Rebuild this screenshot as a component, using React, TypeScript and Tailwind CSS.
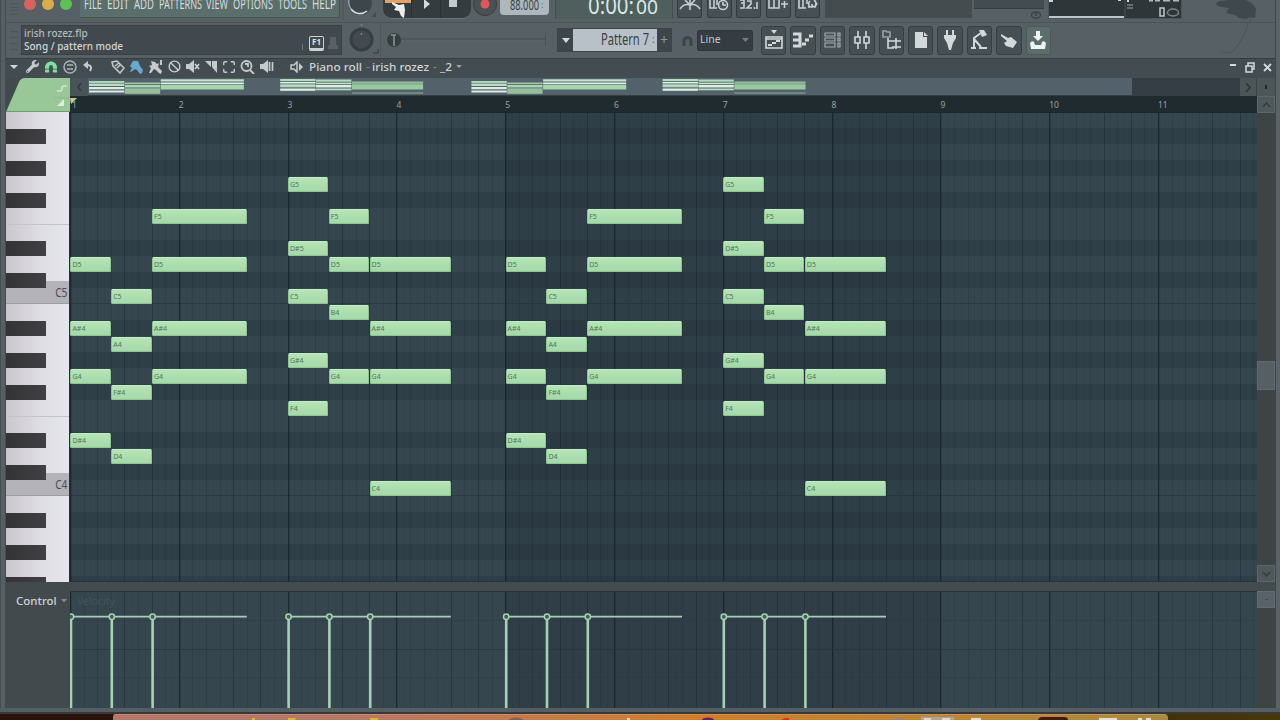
import React from 'react';
import { FaMagnet, FaWrench } from 'react-icons/fa';
import { Ban, Maximize } from 'lucide-react';

const STEP = 6.8;
const ROW = 16;
const GRID_W = 1187;

// Top to bottom, starting at the first visible row
const ROWS = [
    'B5', 'A#5', 'A5', 'G#5', 'G5', 'F#5', 'F5', 'E5', 'D#5', 'D5', 'C#5', 'C5',
    'B4', 'A#4', 'A4', 'G#4', 'G4', 'F#4', 'F4', 'E4', 'D#4', 'D4', 'C#4', 'C4',
    'B3', 'A#3', 'A3', 'G#3', 'G3', 'F#3',
];

interface Chord {
    start: number;
    end: number;
    keys: string[];
}

const PHRASE: Chord[] = [
    { start: 0, end: 6, keys: ['D5', 'A#4', 'G4', 'D#4'] },
    { start: 6, end: 12, keys: ['C5', 'A4', 'F#4', 'D4'] },
    { start: 12, end: 26, keys: ['F5', 'D5', 'A#4', 'G4'] },
    { start: 32, end: 38, keys: ['G5', 'D#5', 'C5', 'G#4', 'F4'] },
    { start: 38, end: 44, keys: ['F5', 'D5', 'B4', 'G4'] },
    { start: 44, end: 56, keys: ['D5', 'A#4', 'G4', 'C4'] },
];

const CHORDS: Chord[] = [0, 64].flatMap(offset =>
    PHRASE.map(c => ({ ...c, start: c.start + offset, end: c.end + offset })),
);

// [top, height, color] stripes of the overview strip, one list per chord
const OVERVIEW: [number, number, string][][] = [
    [[3, 2, '#a9d4b4'], [5.5, 2.5, '#b9dcc4'], [9, 2.3, '#dcefe2'], [12.5, 2, '#dcefe2']],
    [[4.5, 1.7, '#9fcaa5'], [7, 2.5, '#a9d6af'], [10.3, 5.5, '#93c09a']],
    [[1.3, 2.2, '#c4e6cd'], [4.5, 1.8, '#e2f3e8'], [7, 4.5, '#a6d6ac']],
    [[1, 2.2, '#b4dcbc'], [4, 1.5, '#e2f3e8'], [6.3, 3, '#b4dcbc'], [10.5, 2.3, '#dcefe2']],
    [[1.5, 2.2, '#b4dcbc'], [4.6, 1.6, '#c4e6cd'], [7, 2.5, '#dcefe2'], [10.5, 1.8, '#b4dcbc']],
    [[3.5, 2.3, '#93c09a'], [6.2, 5.3, '#98c99f'], [14, 2, '#71877f']],
];

function Grip({ height }: { height: string }) {
    return (
        <div className={`w-[15px] shrink-0 flex flex-col items-center justify-evenly ${height}`}>
            {[0, 1, 2, 3].map(i => (
                <span key={i} className="w-[8px] h-px bg-[#4b555a]" />
            ))}
        </div>
    );
}

function Squeezed({ width, className, children }: { width: number; className: string; children: string }) {
    return (
        <svg width={width} height="22" className={`shrink-0 overflow-visible ${className}`} fill="currentColor">
            <text x="0" y="15" textLength={width} lengthAdjust="spacingAndGlyphs">
                {children}
            </text>
        </svg>
    );
}

const MENU: [string, number][] = [
    ['FILE', 18], ['EDIT', 22], ['ADD', 20], ['PATTERNS', 43],
    ['VIEW', 22], ['OPTIONS', 40], ['TOOLS', 29], ['HELP', 24],
];

function TopButton({ children }: { children: React.ReactNode }) {
    return (
        <div className="w-[25px] h-[18px] shrink-0 rounded-b-[3px] border border-t-0 border-[#333b3f] bg-[#465055] flex justify-center">
            <svg width="22" height="15" fill="none" stroke="#c8cfd1" strokeWidth="1.6">
                {children}
            </svg>
        </div>
    );
}

function MenuBar() {
    return (
        <div className="h-[23px] shrink-0 flex items-start overflow-hidden border-b border-[#495358] bg-[#566065]">
            <Grip height="h-[18px]" />
            <div className="w-[59px] shrink-0 flex gap-[6px] pl-[3px] -mt-[2px]">
                <span className="size-[12px] rounded-full bg-[#d8625f]" />
                <span className="size-[12px] rounded-full bg-[#d9ad4d]" />
                <span className="size-[12px] rounded-full bg-[#5fc155]" />
            </div>
            <div className="w-[260px] h-[18px] shrink-0 flex justify-between items-start bg-[#5a6e6b] border-b border-r border-[#45524f] pl-[4px] pr-[3px] overflow-hidden">
                {MENU.map(([label, width]) => (
                    <Squeezed key={label} width={width} className="text-[#d5dedb] text-[15px] -mt-[6px]">
                        {label}
                    </Squeezed>
                ))}
            </div>
            <svg width="41" height="20" className="shrink-0">
                <circle cx="20" cy="3" r="12" fill="#3d464a" />
                <path d="M11 9A11 11 0 0 0 27 11" fill="none" stroke="#d8dfe0" strokeWidth="1.6" />
                <path d="M11 9A11 11 0 0 1 9 0" fill="none" stroke="#a8b0b2" strokeWidth="1.2" />
                <path d="M31 17h5v-5z" fill="#424c50" />
                <path d="M3 0v20" stroke="#4a5459" />
            </svg>
            <div className="w-[88px] h-[19px] shrink-0 ml-[2px] rounded-b-[9px] bg-[#353c40] border-b border-[#6a7477] overflow-hidden">
                <svg width="88" height="18">
                    <path d="M2 0h26v3H2z" fill="#e0a565" />
                    <path d="M28.500 0v18M57.500 0v18" stroke="#2a3033" />
                    <path d="M41 -1l6 5-6 5z" fill="#d5dadb" />
                    <path d="M66 0h8v7h-8z" fill="#c6cccd" />
                    <path d="M9 2l7 3 5-1 1 6-1 8-3-2-2-5-5-1 2-3-4-3z" fill="#eceeee" />
                </svg>
            </div>
            <svg width="28" height="18" className="shrink-0">
                <circle cx="14" cy="4" r="11.5" fill="#4b5054" stroke="#353c40" />
                <circle cx="14" cy="4" r="4.5" fill="#e2585a" />
            </svg>
            <div className="w-[49px] h-[15px] shrink-0 rounded-b-[4px] ml-px bg-[#adb7bc] flex pl-[10px] overflow-hidden">
                <Squeezed width={29} className="text-[#394347] text-[14px] -mt-[5px]">
                    88.000
                </Squeezed>
                <span className="pl-[2px] -mt-[2px] text-[9px] leading-[14px] text-[#59646a]">:</span>
            </div>
            <div className="w-[118px] h-[19px] shrink-0 ml-[6px] bg-[#4e5f5e] border-x border-[#424e4e] flex pl-[32px] overflow-hidden">
                <Squeezed width={46} className="text-[#dbe7e4] text-[23px] -mt-[1px]">
                    0:00:
                </Squeezed>
                <Squeezed width={22} className="text-[#dbe7e4] text-[19px] ml-[2px] -mt-[1px]">
                    00
                </Squeezed>
            </div>
            <div className="shrink-0 flex gap-[4.5px] ml-[4px]">
                <TopButton>
                    <path d="M1 9q4-6 10-4 6-2 10 4M11 0v10M6 0l4 4M16 0l-4 4" />
                </TopButton>
                <TopButton>
                    <path d="M2 0v8h7M6 0v8M9 0v5" />
                    <circle cx="15" cy="5" r="4.5" />
                    <path d="M15 2v3h3" />
                </TopButton>
                <TopButton>
                    <path d="M2 0h4v3H3h3v5H2M9 1h4v3L9 8h5M19 2v7M16.500 7v2" />
                </TopButton>
                <TopButton>
                    <path d="M2 0v8h10V0M7 0v8M14 4h7M17.500 1v7" />
                </TopButton>
                <TopButton>
                    <path d="M2 0v8h7M6 0v8M10 0v4" />
                    <path d="M13 7a4 4 0 0 1 0-6M17 0a4 4 0 0 1 1 6M11 7h4v-3M20 3l-2 4-3-1" />
                </TopButton>
            </div>
            <div className="w-[147px] h-[18px] shrink-0 ml-[5px] bg-[#444c50]" />
            <div className="w-[70px] shrink-0 ml-[2px] flex flex-col items-end">
                <div className="w-full h-[9px] bg-[#444c50] border-b border-[#363e42]" />
                <svg width="14" height="12" className="mr-[1px]" fill="none" stroke="#3a4347" strokeWidth="1.3">
                    <ellipse cx="7" cy="6" rx="4.500" ry="3" />
                    <path d="M7 4v3" />
                </svg>
            </div>
            <svg width="134" height="19" className="shrink-0 ml-[4px]">
                <path d="M0 0h134v19H0z" fill="#4a5357" />
                <path d="M1 0h132v18H1z" fill="#2f363a" />
                <path d="M1 17h75" stroke="#bfc6c8" strokeWidth="2" />
                <path d="M77 0v18" stroke="#454e52" />
                <path d="M1 0h4v2H1zM70 0h3v1h-3zM79 0h2v2h-2z" fill="#cfd5d6" />
                <path d="M79 4h6v2h-6zM79 7h6v2h-6z" fill="#667074" />
                <path d="M112 8h4v8h-4z" fill="none" stroke="#c0c7c9" strokeWidth="1.5" />
                <ellipse cx="125" cy="12.500" rx="5.500" ry="3.500" fill="none" stroke="#7c8689" strokeWidth="1.5" />
                <path d="M101 0h4M107 0h5M115 0h7M125 0h6" stroke="#b0b8ba" strokeWidth="3" />
            </svg>
            <svg width="70" height="22" className="shrink-0 ml-[5px]">
                <path d="M29 4q2-4 8-3l5-2h14q10 3 13 10l-1 9-5-1-4 2-7-1-4-3-9-2 3-5-7-1-4-1z" fill="#3f484d" />
                <path d="M64 17q-1 3-1 5" stroke="#465055" fill="none" />
            </svg>
        </div>
    );
}

function ToolButton({ active, children }: { active?: boolean; children: React.ReactNode }) {
    return (
        <div
            className={`h-[29px] rounded-[3px] border flex items-center justify-center ${
                active ? 'bg-[#5c6d6b] border-[#4d5a5a]' : 'bg-[#454f54] border-[#353e42]'
            }`}
        >
            <svg width="22" height="22" fill="none" stroke="#d3d9da" strokeWidth="1.6">
                {children}
            </svg>
        </div>
    );
}

function ToolBar() {
    return (
        <div className="h-[35px] shrink-0 flex items-center bg-[#566065] pb-px">
            <Grip height="h-[29px]" />
            <div className="w-[321px] h-[30px] shrink-0 bg-[#41494e] border border-[#394145] flex justify-between">
                <div className="pl-[2px] pt-px text-[10px] leading-[12.500px] font-medium text-[#cfd5d7]">
                    <p className="text-[#b3babd]">irish rozez.flp</p>
                    <p className="whitespace-nowrap">Song / pattern mode</p>
                </div>
                <div className="flex items-end pb-[3px] pr-[2px]">
                    <span className="w-px h-[6px] bg-[#6c7579] mr-[6px] mb-px" />
                    <span className="w-[15px] h-[15px] rounded-[2px] border-[1.500px] border-b-[3px] border-[#cbd2d3] text-[8px] leading-[9px] text-center font-bold text-[#dde3e4]">
                        F1
                    </span>
                    <svg width="15" height="15" fill="#586165">
                        <path d="M6 1h6v8h2v4H4V9h2z" />
                    </svg>
                </div>
            </div>
            <svg width="38" height="34" className="shrink-0" fill="none">
                <circle cx="19.500" cy="16.500" r="12" fill="#363e43" />
                <circle cx="19.500" cy="16.500" r="9" fill="#434b51" />
                <path d="M19.500 10v2M19.500 1v2" stroke="#7a8386" strokeWidth="1.500" />
                <path d="M31 30h5v-4" stroke="#3f484c" strokeWidth="1.500" />
            </svg>
            <svg width="178" height="34" className="shrink-0" fill="none">
                <path d="M0.500 0v34" stroke="#4d565b" />
                <path d="M14 16h152" stroke="#4c565b" strokeWidth="2" />
                <path d="M14 18h152" stroke="#5e686c" />
                <path d="M165.500 9v14" stroke="#495257" />
                <circle cx="14" cy="17" r="7" fill="#373e42" />
                <path d="M14 12v11M11 12h5" stroke="#8d9695" strokeWidth="1.500" />
            </svg>
            <div className="w-[115px] h-[24px] shrink-0 -ml-px flex border border-[#3d464a] bg-[#3d464a]">
                <div className="w-[15px] flex items-center justify-center">
                    <svg width="8" height="5" fill="#d5dadb">
                        <path d="M0 0h8L4 5z" />
                    </svg>
                </div>
                <div className="w-[84px] h-[22px] bg-[#b7c1c7] flex justify-end pr-[2px]">
                    <Squeezed width={48} className="text-[#394247] text-[16px] mt-px">
                        Pattern 7
                    </Squeezed>
                    <span className="w-[6px] pl-[3px] text-[10px] leading-[20px] text-[#59646a]">:</span>
                </div>
                <div className="flex-1 text-center text-[14px] leading-[21px] text-[#8b9598]">+</div>
            </div>
            <div className="w-[25px] shrink-0 flex justify-end pr-[4px] pl-[4px]">
                <svg width="11" height="11" fill="none" stroke="#3b4448" strokeWidth="3">
                    <path d="M2 11V6a3.500 3.500 0 0 1 7 0v5" />
                </svg>
            </div>
            <div className="w-[56px] h-[21px] shrink-0 rounded-[2px] bg-[#363d41] border border-[#30373b] flex items-center justify-between pl-[2px] pr-[3px] text-[10.5px] text-[#bfc6c9]">
                Line
                <svg width="7" height="4" fill="#737d81">
                    <path d="M0 0h7L3.500 4z" />
                </svg>
            </div>
            <div className="w-[290px] shrink-0 ml-[8px] grid grid-cols-10 gap-[4px]">
                <ToolButton>
                    <path d="M3 8h16v11H3zM3 10h16" />
                    <path d="M8 1h6l-3 4z" fill="#d3d9da" stroke="none" />
                    <path d="M5 16h4M9 14h4M13 12h4" strokeWidth="2" />
                </ToolButton>
                <ToolButton>
                    <path d="M1 5h7v12H1M1 11h7" strokeWidth="3" />
                    <path d="M10 15h4M13 11h4M17 7h4" strokeWidth="3" />
                </ToolButton>
                <ToolButton>
                    <path d="M4 4h10v3H4zM4 9h10v3H4zM4 14h10v4H4zM17 4h2v3h-2zM17 9h2v3h-2zM17 14h2v4h-2z" stroke="#a3abad" strokeWidth="1.200" />
                </ToolButton>
                <ToolButton>
                    <path d="M7 2v6M7 14v6M15 2v6M15 14v6M4 8h5v6H4zM13 8h5v6h-5z" />
                </ToolButton>
                <ToolButton>
                    <path d="M3 2h3l1 1h3v5H3z" stroke="#9aa3a6" />
                    <path d="M8 9v10h6M8 12h6M16 9v11M12 12h9M12 18h9" />
                </ToolButton>
                <ToolButton>
                    <path d="M5 3h8v5h4v11H5zM14 3l4 4h-4z" fill="#d3d9da" stroke="none" />
                </ToolButton>
                <ToolButton>
                    <path d="M7 1h2v5h4V1h2v5h2v3l-3 5-2 7h-2l-2-7-3-5V6h2z" fill="#d3d9da" stroke="none" />
                </ToolButton>
                <ToolButton>
                    <path d="M6 18V9l7-5M6 10l7 8M3 19h5M11 19h8" strokeWidth="2" />
                    <path d="M11 1h5l3 5-5 2z" fill="#d3d9da" stroke="none" />
                </ToolButton>
                <ToolButton>
                    <path d="M3 5l7 4 3-1 6 5-4 6-7-2-2-3 3-2-6-5z" fill="#d3d9da" stroke="none" />
                </ToolButton>
                <ToolButton active>
                    <path d="M9 2h4v5h3l-5 5-5-5h3z" fill="#eef4f3" stroke="none" />
                    <path d="M3 14q2-3 4-1l1 3h6l1-3q2-2 4 1l-1 6H4z" fill="#eef4f3" stroke="none" />
                </ToolButton>
            </div>
            <svg width="34" height="34" className="ml-auto mr-[21px] shrink-0" fill="none" stroke="#49545a">
                <path d="M28 0q-3 14-14 27-4 5-13 1" />
            </svg>
        </div>
    );
}

function Speaker({ children }: { children?: React.ReactNode }) {
    return (
        <svg width="15" height="13" fill="#c5cbcd" stroke="#c5cbcd" strokeWidth="1.700">
            <path d="M1 4h3l5-4v13L4 9H1z" stroke="none" />
            {children}
        </svg>
    );
}

function TitleBar() {
    return (
        <div className="h-[20px] shrink-0 flex items-center pb-[4px] border-t border-[#363e42] bg-[#434c51] text-[#c5cbcd]">
            <svg width="16" height="6" className="shrink-0">
                <path d="M4 1h8L8 5z" fill="#d0d5d7" />
            </svg>
            <div className="shrink-0 flex items-center gap-[6px] ml-[4px] w-[80px]">
                <FaWrench size={13} />
                <FaMagnet size={12} color="#7fe0a0" className="-scale-y-100" />
                <svg width="14" height="14" fill="none" stroke="#aab2b5" strokeWidth="1.500">
                    <circle cx="7" cy="7" r="6" />
                    <path d="M4 5h6M4 9h6" />
                </svg>
                <svg width="10" height="11" fill="none" stroke="#c5cbcd" strokeWidth="2">
                    <path d="M2 4h3q5 1 2 6" />
                    <path d="M0 4l5-4v8z" fill="#c5cbcd" stroke="none" />
                </svg>
            </div>
            <div className="shrink-0 flex items-center gap-[4px] ml-[5px] w-[179px]">
                <svg width="14" height="14" fill="none" stroke="#c5cbcd" strokeWidth="1.500">
                    <path d="M1 2l5-1 7 7-4 5-7-7zM4 6l4-3M6 8l4-4" />
                </svg>
                <svg width="15" height="14" fill="#69a9cf">
                    <path d="M4 1h5l2 5 3 4-1 3-2 1-3-4-2-1-4 3H1l2-4-2-2z" />
                </svg>
                <svg width="16" height="14" fill="#c5cbcd">
                    <path d="M3 1l4 1 2 2 2-1-1 4 4 4-1 3-2-1-3-3-2-1-3 4H1l2-5-2-2 3-1zM12 0h2v5h-2z" />
                </svg>
                <Ban size={13} strokeWidth={2.6} />
                <Speaker>
                    <path d="M10 4l4 5M14 4l-4 5" />
                </Speaker>
                <svg width="14" height="13" fill="#c5cbcd">
                    <path d="M1 1h6v6zM8 1h5v12L8 7z" />
                </svg>
                <Maximize size={14} strokeWidth={2.4} />
                <svg width="15" height="14" fill="none" stroke="#c5cbcd" strokeWidth="1.800">
                    <circle cx="6.500" cy="6" r="5" />
                    <path d="M10 10l4 4M5 4h3v3" />
                </svg>
                <Speaker>
                    <path d="M10.500 2v9M13.500 2v9" />
                </Speaker>
            </div>
            <div className="flex-1 flex items-center">
                <svg width="14" height="12" fill="none" stroke="#c5cbcd" strokeWidth="1.500">
                    <path d="M1 4h3l3-3v10L4 8H1z" />
                    <path d="M9 2l4 4-4 4z" fill="#c5cbcd" stroke="none" />
                </svg>
                <svg width="147" height="18" className="ml-[5px] text-[11.500px] font-medium overflow-visible" fill="#cdd3d5">
                    <text x="0" y="13" textLength="53" lengthAdjust="spacingAndGlyphs">Piano roll</text>
                    <text x="57" y="13" fill="#7b8487">-</text>
                    <text x="63" y="13" textLength="57" lengthAdjust="spacingAndGlyphs">irish rozez</text>
                    <text x="124" y="13" fill="#7b8487">-</text>
                    <text x="131" y="13" textLength="12" lengthAdjust="spacingAndGlyphs">_2</text>
                </svg>
                <svg width="6" height="4" fill="#9aa3a6">
                    <path d="M0 0h6L3 3z" />
                </svg>
            </div>
            <svg width="46" height="14" className="shrink-0" fill="none" stroke="#d3d9da" strokeWidth="1.500">
                <path d="M1 5h6" strokeWidth="2" />
                <path d="M17 6h6v6h-6zM19 6V3h6v6h-2" />
                <path d="M35 4l7 7M42 4l-7 7" strokeWidth="1.800" />
            </svg>
        </div>
    );
}

function Overview() {
    return (
        <div className="h-[18px] flex bg-[#363e45]">
            <div className="w-[18px] shrink-0 bg-[#48535a] flex items-center justify-center">
                <svg width="5" height="8" fill="none" stroke="#2f383d" strokeWidth="1.500">
                    <path d="M4 0L1 4l3 4" />
                </svg>
            </div>
            <svg width="1044" height="17" className="shrink-0 bg-[#53616a]">
                {CHORDS.map((chord, i) =>
                    OVERVIEW[i % 6].map(([top, height, color]) => (
                        <rect
                            key={`${i}-${top}`}
                            x={1 + chord.start * 5.975}
                            y={top}
                            width={(chord.end - chord.start) * 5.975 - 0.5}
                            height={height}
                            fill={color}
                        />
                    )),
                )}
            </svg>
            <div className="flex-1" />
            <div className="w-[17px] shrink-0 bg-[#4c5659] border-r border-[#3a4347] flex items-center justify-center">
                <svg width="6" height="9" fill="none" stroke="#2b3438" strokeWidth="1.500">
                    <path d="M1 0l4 4.500L1 9" />
                </svg>
            </div>
        </div>
    );
}

function Ruler() {
    return (
        <div className="h-[17px] relative overflow-hidden bg-[#202b30] border-b border-[#1c272c]">
            {Array.from({ length: 11 }, (_, i) => (
                <span
                    key={i}
                    className="absolute top-[3px] text-[8.500px] leading-[12px] text-[#97a2a6]"
                    style={{ left: i * 16 * STEP + (i === 0 ? 2 : 0) }}
                >
                    {i + 1}
                </span>
            ))}
            <svg width="8" height="9" className="absolute left-0 top-[1px]">
                <path d="M0 1h7L1 7z" fill="#c9c98a" />
            </svg>
        </div>
    );
}

function lineOpacity(i: number) {
    if (i % 16 === 0) return 0.7;
    if (i % 16 === 12 || i % 16 === 8) return 0.35;
    if (i % 4 === 0) return 0.2;
    return i % 2 === 0 ? 0.14 : 0.05;
}

// Vertical time lines shared by the note area and the velocity lane
function TimeLines({ height }: { height: number }) {
    return (
        <svg width={GRID_W} height={height} className="absolute inset-0">
            <rect x={64 * STEP} width={64 * STEP} height={height} fill="#14212a" fillOpacity="0.18" />
            {Array.from({ length: 175 }, (_, i) => (
                <rect
                    key={i}
                    x={Math.round(i * STEP)}
                    width={i % 16 === 0 ? 1.3 : 1}
                    height={height}
                    fill="#0f1d24"
                    fillOpacity={lineOpacity(i)}
                />
            ))}
        </svg>
    );
}

function Piano() {
    return (
        <div className="w-[64px] h-[470px] overflow-hidden relative bg-linear-to-r from-[#c9c7cc] via-[#dddce2] to-[#e6e6ee] border-r border-[#23313a]">
            {ROWS.map(name => {
                const isBlack = name.includes('#');
                const isC = name.startsWith('C') && !isBlack;
                return (
                    <div
                        key={name}
                        className={`h-[16px] relative ${isC ? 'bg-[#b4b3b9] border-b border-[#9c9ca3]' : ''} ${
                            name.startsWith('E') ? 'border-t border-[#c3c3ca]' : ''
                        }`}
                    >
                        {isBlack && (
                            <div className="w-[40px] h-[16px] pt-px">
                                <div className="h-[15px] bg-linear-to-r from-[#333335] to-[#414143]" />
                            </div>
                        )}
                        {isC && (
                            <>
                                <div className="absolute right-0 -top-[7px] w-[23px] h-[8px] bg-[#b4b3b9]" />
                                <span className="absolute right-[2px] -top-[3px] text-[12px] leading-[16px] text-[#4d4d55] origin-right scale-x-[0.85]">
                                    {name}
                                </span>
                            </>
                        )}
                    </div>
                );
            })}
        </div>
    );
}

function NoteArea() {
    return (
        <div className="h-[469px] relative overflow-hidden border-b border-[#26333a]">
            <div className="-mt-px">
                {ROWS.map(name => (
                    <div
                        key={name}
                        className={`h-[16px] ${name.includes('#') ? 'bg-[#2f3f47]' : 'bg-[#35464e]'} ${
                            name.startsWith('C') && !name.includes('#') ? 'border-b border-[#2c3b43]' : ''
                        }`}
                    />
                ))}
            </div>
            <TimeLines height={469} />
            {CHORDS.map(chord =>
                chord.keys.map(name => (
                    <div
                        key={`${chord.start}-${name}`}
                        className="absolute h-[15px] rounded-[1.500px] border border-[#8cc495] border-t-[#c3eec5] bg-linear-to-b from-[#b4e5b5] to-[#a6d7a9] pl-px text-[7px] leading-[13px] text-[#4c7853] overflow-hidden"
                        style={{
                            left: chord.start * STEP + 0.4,
                            top: ROWS.indexOf(name) * ROW,
                            width: (chord.end - chord.start) * STEP - 0.4,
                        }}
                    >
                        {name}
                    </div>
                )),
            )}
        </div>
    );
}

function VelocityLane() {
    const stems = CHORDS.map(c => c.start * STEP);
    const lines = [[0, 26], [32, 56], [64, 90], [96, 120]];
    return (
        <div className="h-[117px] relative overflow-hidden bg-[#36464e] border-t border-[#26333a]">
            <TimeLines height={117} />
            <svg width={GRID_W} height="117" className="absolute inset-0">
                {[28, 57, 85].map(y => (
                    <path key={y} d={`M0 ${y + 0.5}H${GRID_W}`} stroke="#24333b" strokeOpacity={y === 57 ? 0.7 : 0.25} />
                ))}
                {lines.map(([a, b]) => (
                    <path key={a} d={`M${a * STEP} 24.700H${b * STEP}`} stroke="#a9cdb6" strokeWidth="1.700" />
                ))}
                {stems.map(x => (
                    <g key={x} stroke="#a6d2b3">
                        <path d={`M${x + 1} 27V117`} strokeWidth="2.600" />
                        <circle cx={x + 1} cy="24.700" r="2.700" fill="#3e6150" strokeWidth="1.500" />
                    </g>
                ))}
            </svg>
            <span className="absolute left-[7px] top-[2px] text-[10.500px] leading-[15px] text-[#44545b]">Velocity</span>
        </div>
    );
}

function ScrollButton({ path }: { path: string }) {
    return (
        <div className="h-[17px] shrink-0 bg-[#4f595c] border border-[#5d676a] flex items-center justify-center">
            <svg width="9" height="6" fill="none" stroke="#343d41" strokeWidth="1.500">
                <path d={path} />
            </svg>
        </div>
    );
}

function PianoRoll() {
    return (
        <div className="h-[630px] shrink-0 flex bg-[#434a4e]">
            <div className="w-[64px] shrink-0">
                <svg width="64" height="34" className="block">
                    <path d="M0 34L13 4q2-4 6-4h45v34z" fill="#98c897" />
                    <path d="M0 33.500h64" stroke="#6f9a72" />
                    <path d="M51 13h3q2 0 2-2.500t2-2.500h3" fill="none" stroke="#cfe8cf" strokeWidth="1.400" />
                    <path d="M51 28h7v-7z" fill="#dcf0dc" />
                    <path d="M48 20h16" stroke="#8bbb8c" />
                </svg>
                <Piano />
                <div className="flex items-center pl-[10px] pt-[10px] text-[11.500px] leading-[17px] font-medium text-[#cdd3d5]">
                    <span className="w-[42px]">Control</span>
                    <svg width="6" height="4" className="ml-[3px] shrink-0" fill="#838c8f">
                        <path d="M0 0h6L3 3.500z" />
                    </svg>
                </div>
            </div>
            <div className="w-[1187px] shrink-0">
                <Overview />
                <Ruler />
                <NoteArea />
                <div className="h-[9px] bg-[#434b4f]" />
                <VelocityLane />
            </div>
            <div className="w-[18px] shrink-0 flex flex-col bg-[#3c4444]">
                <div className="h-[18px] shrink-0 bg-[#4c5659] flex items-center justify-center">
                    <span className="w-[2px] h-[4px] bg-[#20282c]" />
                </div>
                <ScrollButton path="M1 5l3.500-4L8 5" />
                <div className="flex-1 pt-[248px]">
                    <div className="h-[29px] bg-[#566064] border border-[#616b6e]" />
                </div>
                <ScrollButton path="M1 1l3.500 4L8 1" />
                <div className="h-[9px] shrink-0 bg-[#434b4f]" />
                <div className="h-[17px] shrink-0 bg-[#596268] border border-[#636c71] flex items-center justify-center">
                    <span className="w-[3px] h-px bg-[#434b50]" />
                </div>
                <div className="h-[100px] shrink-0" />
            </div>
        </div>
    );
}

// Only the upper edge of the dock shows under the window
function Dock() {
    return (
        <div className="h-[6px] shrink-0 flex bg-linear-to-r from-[#2d120b] from-5% via-[#1a1208] via-50% to-[#4a3708]">
            <svg width="1055" height="6" className="ml-[113px] rounded-tl-[3px] rounded-tr-[4px] bg-linear-to-r from-[#b57766] from-20% via-[#d17e26] via-55% to-[#a88a3e]">
                <path d="M0 0.500h1055" stroke="#dba581" strokeOpacity="0.4" />
                <path d="M139 4h3v2h-3zM175 4h8l-1 2h-7zM257 4h8v2h-8z" fill="#e2b62c" />
                <ellipse cx="403" cy="6" rx="7" ry="2.500" fill="#8a6050" />
                <path d="M514 4h3v2h-3z" fill="#ead4c4" />
                <ellipse cx="595" cy="6" rx="6" ry="2.500" fill="#68205f" />
                <path d="M668 6l4-2h4v2z" fill="#e0331c" />
                <ellipse cx="785" cy="6" rx="6" ry="2.500" fill="#a58272" />
                <path d="M808 3h33v3h-33z" fill="#b6a294" />
                <path d="M811 4h7v2h-7zM829 4h8v2h-8z" fill="#ded5cd" />
                <path d="M858 4h10v2h-10zM986 4h18v2h-18zM1025 4h4v2h-4zM1033 4h5v2h-5z" fill="#eadfce" />
                <path d="M925 6q1-3 4-3h22q4 0 4 3z" fill="#48180f" />
            </svg>
        </div>
    );
}

export default function App() {
    return (
        <div
            className="w-[1280px] h-[720px] overflow-hidden flex flex-col bg-[#3f484c]"
            style={{ fontFamily: '"Noto Sans", "Open Sans", sans-serif' }}
        >
            <div className="h-[708px] shrink-0 flex">
                <div className="w-[6px] shrink-0 bg-[#566064] border-x border-[#434c50]" />
                <div className="w-[1269px] shrink-0 flex flex-col overflow-hidden">
                    <MenuBar />
                    <ToolBar />
                    <TitleBar />
                    <PianoRoll />
                </div>
                <div className="w-[5px] shrink-0 bg-[#5a6468] border-l border-[#3c4549]" />
            </div>
            <div className="h-[6px] shrink-0 bg-[#555f63] border-b-2 border-[#373a3b]" />
            <Dock />
        </div>
    );
}
